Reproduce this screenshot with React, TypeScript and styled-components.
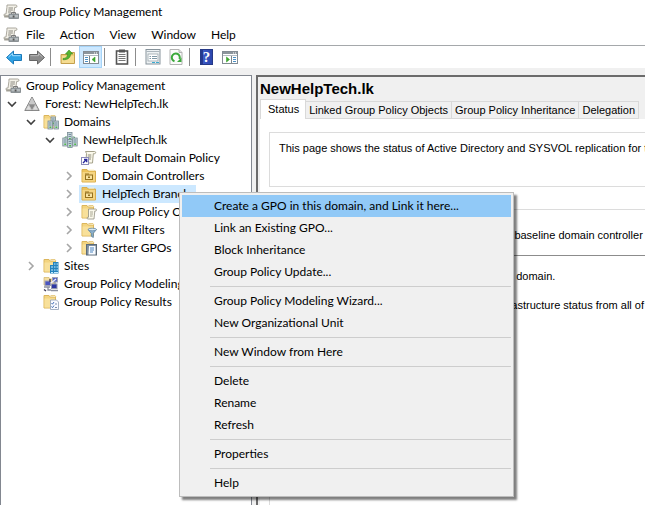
import React from "react";
import styled, { createGlobalStyle, css } from "styled-components";

const GlobalStyle = createGlobalStyle`
  *, *::before, *::after { box-sizing: border-box; }
  body { margin: 0; overflow: hidden; background: #f0f0f0; }
  button { font: inherit; color: inherit; background: none; border: 0; padding: 0; margin: 0; text-align: left; }
  ul { list-style: none; margin: 0; padding: 0; }
  svg { display: block; flex: none; }
`;

/* ---------- icons ---------- */

const Svg = ({ children, size = 16 }: { children: React.ReactNode; size?: number }) => (
  <svg width={size} height={size} viewBox="0 0 16 16" aria-hidden="true">
    {children}
  </svg>
);

const FolderBase = () => (
  <>
    <path d="M1 1.500h5l1.200 1.500H12.500v11H1z" fill="#f3d480" stroke="#dcb65c" />
    <path d="M1.500 4.500h10.500v9H1.500z" fill="#f8e09a" />
    <path d="M7.500 1.500h4.500l1 1.500" fill="#fff3c8" stroke="#dcb960" strokeWidth=".7" />
  </>
);

const ConsoleIcon = () => (
  <Svg>
    <path d="M4 1h8.700c1.600 0 1.800 2.200.3 2.400h-1.300L10.500 12H2c-1.600 0-1.600-2 0-2h1l.9-6.500z" fill="#f3f1e8" stroke="#a19e94" strokeWidth=".9" />
    <path d="M5.500 4h4.500M5.300 6h4.500M5 8h3" stroke="#8b8981" />
    <path d="M1.200 12.500h6" stroke="#a19e94" strokeWidth="2" />
    <path d="M8.500 10V8.500h4V10" fill="none" stroke="#777" />
    <rect x="6" y="10" width="9.500" height="4.500" fill="#9aa1a5" stroke="#7c8285" strokeWidth=".8" />
    <path d="M6.500 12h8.500" stroke="#d3d7d8" />
    <rect x="9.700" y="11.500" width="1.800" height="2" fill="#555" />
  </Svg>
);

const ForestIcon = () => (
  <Svg>
    <path d="M8 1l7.200 13.500H.8z" fill="#d5d5d5" stroke="#808080" />
    <path d="M8 1.800l3.300 6.200H4.700z" fill="#c9c9c9" />
    <path d="M4.600 8.200h6.800L8 14z" fill="#8a8a8a" />
    <path d="M4.600 8.800L7.600 14H1.700zM11.400 8.800L8.400 14h5.900z" fill="#dedede" stroke="#aaa" strokeWidth=".5" />
  </Svg>
);

const Tower = ({ x, y }: { x: number; y: number }) => (
  <g>
    <rect x={x} y={y} width="4.500" height="8" fill="#c3d3da" stroke="#7b8d95" strokeWidth=".8" />
    <path d={`M${x + 1} ${y + 2}h2.500M${x + 1} ${y + 4}h2.500`} stroke="#5f7e8c" strokeWidth=".8" />
    <rect x={x + 1.5} y={y + 5.5} width="1.800" height="1.500" fill="#4fb848" />
  </g>
);

const DomainsIcon = () => (
  <Svg>
    <FolderBase />
    <Tower x={8} y={3} />
    <Tower x={5} y={7} />
    <Tower x={11} y={7} />
  </Svg>
);

const DomainIcon = () => (
  <Svg>
    <Tower x={5.5} y={0.5} />
    <path d="M3 8V5h2M12.500 8V5h-2M8 8v5" fill="none" stroke="#5a9e70" />
    <Tower x={0.8} y={6} />
    <Tower x={5.7} y={7.5} />
    <Tower x={10.7} y={6} />
  </Svg>
);

const LinkIcon = () => (
  <Svg>
    <path d="M4.500 1.500h9c1.700 0 1.500 2.200 0 2.200h-1.200L11.500 13H5c-1.500 0-1.500-2 0-2l.5-7.500z" fill="#fbf9ec" stroke="#9b9780" strokeWidth=".9" />
    <path d="M6.800 5h3.500M6.800 7h3.500M6.500 9h3.500" stroke="#8a8878" />
    <rect x=".5" y="7.500" width="7" height="7" fill="#fff" stroke="#8b8bb8" />
    <path d="M2 13l3-3M3 9.500h2.700v2.800" fill="none" stroke="#29299c" strokeWidth="1.400" />
  </Svg>
);

const OuIcon = () => (
  <Svg>
    <path d="M1 1.500h5l1.200 1.500H14.500v11H1z" fill="#edc35b" stroke="#d8ae4e" />
    <path d="M1.500 4h12.500v9.500h-12.500z" fill="#f5d582" />
    <path d="M8 1.500h5v1H8z" fill="#fff3c8" />
    <rect x="4.500" y="7" width="7" height="4.500" fill="#f9e3a0" stroke="#94711f" />
    <path d="M4 6h4" stroke="#94711f" />
    <rect x="7" y="8.500" width="2" height="1.500" fill="#94711f" />
  </Svg>
);

const GpoFolderIcon = () => (
  <Svg>
    <FolderBase />
    <path d="M7.500 5h7c1.500 0 1.400 2 0 2h-.7L13 15H7c-1.300 0-1.300-1.800 0-1.800h.5z" fill="#fbf9ec" stroke="#918e80" strokeWidth=".8" />
    <path d="M9 8h3M9 10h3M9 12h2.500" stroke="#96937f" strokeWidth=".8" />
  </Svg>
);

const FilterFolderIcon = () => (
  <Svg>
    <FolderBase />
    <path d="M7 7.500h8.500l-3.200 3.800v4.200l-2-1.300v-2.900z" fill="#8fb4d0" stroke="#587c9b" strokeWidth=".8" />
    <ellipse cx="11.200" cy="7.500" rx="4.200" ry="1.300" fill="#d6e8f4" stroke="#587c9b" strokeWidth=".7" />
  </Svg>
);

const StarterIcon = () => (
  <Svg>
    <FolderBase />
    <rect x="5.500" y="4.500" width="10" height="10.500" fill="#7e8fa0" stroke="#5c6b79" />
    <path d="M8 6h6.500v8.500H7.500z" fill="#f8fbff" />
    <path d="M9 8h4M9 10h4M9 12h3" stroke="#4a83bd" />
  </Svg>
);

const SitesIcon = () => (
  <Svg>
    <FolderBase />
    <path d="M7 7h3V4h5.500v11.500H7z" fill="#2383bd" />
    <path d="M8 9h2M11 6h1.500M13.500 6H15M11 9h1.500M13.500 9H15M8 12h2M11 12h1.500M13.500 12H15M8 14.500h2M11 14.500h4" stroke="#c5ecff" strokeWidth="1.200" />
  </Svg>
);

const ModelingIcon = () => (
  <Svg>
    <path d="M1 1.500h5l1 1.500h4V9H1z" fill="#f4dda0" stroke="#d2b566" strokeWidth=".7" />
    <rect x="2" y="5" width="5.500" height="4.500" fill="#4b55c0" stroke="#9fa2b5" />
    <rect x="9.500" y="1.500" width="5" height="4.500" fill="#5060c4" stroke="#9fa2b5" />
    <rect x="8.500" y="8" width="5.500" height="4.500" fill="#2d36a2" stroke="#9498ad" />
    <path d="M1 11h6M8 14.500h7M5 11v3h3M12 6v2" stroke="#8b8f9e" strokeWidth="1.300" fill="none" />
    <path d="M8 7l5-4" stroke="#eef" strokeWidth="1.200" />
    <path d="M1 13.500l2 1.500M7 3v3" stroke="#403b55" strokeWidth="1.400" />
  </Svg>
);

const ResultsIcon = () => (
  <Svg>
    <FolderBase />
    <path d="M7.500 6h6l2 2v7.500h-8z" fill="#f9fbff" stroke="#8fa0b5" strokeWidth=".8" />
    <path d="M8.500 9l1 1.200L11 8M8.500 12.500l1 1.200 1.500-2.200" fill="none" stroke="#4772b8" />
    <path d="M12 10h2M12 13.500h2" stroke="#7a8cab" />
  </Svg>
);

const Arrow = ({ back }: { back?: boolean }) => (
  <Svg>
    <path
      d={back ? "M.5 8.500L7.500 2v3.500h8v6h-8V15z" : "M15.500 8.500L8.500 2v3.500h-8v6h8V15z"}
      fill={back ? "#2ea3e6" : "#8c8c8c"}
      stroke={back ? "#1b78b8" : "#666"}
      strokeLinejoin="round"
    />
    <path d={back ? "M2.500 8L6.500 4.500v2.200h8" : "M1.500 6.700h8V4.500l4 3.500"} fill="none" stroke={back ? "#9cdcff" : "#bcbcbc"} />
  </Svg>
);

const UpFolderIcon = () => (
  <Svg>
    <path d="M1 5.500h7l1-2h5.500v11H1z" fill="#efcf76" stroke="#c4a04d" />
    <path d="M2 7h12v7H2z" fill="#f5dc91" />
    <path d="M3 9.500c3 0 4.500-1.500 4.700-4.500H5.500L9 1l3.800 4h-2.300c0 4-3 6-7.500 5.700z" fill="#56b432" stroke="#368c20" strokeWidth=".6" />
  </Svg>
);

const PaneIcon = ({ right }: { right?: boolean }) => (
  <Svg>
    <rect x=".5" y="2.500" width="15" height="12" fill="#fff" stroke="#838c94" />
    <path d="M1 4h14" stroke="#8c959c" strokeWidth="2" />
    <path d="M11 4h1M13 4h1" stroke="#fff" />
    <path d="M1 6.500h14" stroke="#b3bcc3" />
    <path d={right ? "M9.500 7v7" : "M6.500 7v7"} stroke="#7b858c" />
    <path d={right ? "M11 8.500h3M11 10.500h3M11 12.500h3" : "M2 8.500h3M2 10.500h3M2 12.500h3"} stroke="#4b90c5" />
    <path d={right ? "M4.500 8v5l3-2.500z" : "M12 8v5l-3-2.500z"} fill="#3ba52d" stroke="#3ba52d" strokeWidth=".6" />
  </Svg>
);

const ClipboardIcon = () => (
  <Svg>
    <rect x="2.500" y="2" width="11" height="13" fill="#fff" stroke="#555" strokeWidth="1.600" />
    <rect x="5" y=".5" width="6" height="3" fill="#555" />
    <path d="M4.500 5.500h7M4.500 7.500h7M4.500 9.500h7M4.500 11.500h7" stroke="#777" />
  </Svg>
);

const PropertiesIcon = () => (
  <Svg>
    <rect x="1" y=".5" width="14" height="14.500" fill="#eef2f4" stroke="#87939b" />
    <path d="M1.500 2.500h13" stroke="#acb6bd" />
    <rect x="3" y="5" width="10" height="7" fill="#fff" stroke="#9aa5ac" strokeWidth=".8" />
    <path d="M4.500 7.500H6M7 7.500h5M4.500 9.500H6M7 9.500h5" stroke="#7f98a6" />
    <path d="M7 13.500h3M11 13.500h3" stroke="#3aaad0" />
  </Svg>
);

const RefreshIcon = () => (
  <Svg>
    <path d="M2 .5h9l3 3v12H2z" fill="#fbfbfb" stroke="#b4b4b4" />
    <path d="M11 .5v3h3" fill="#ddd" stroke="#b4b4b4" />
    <path d="M6.500 12.300A4 4 0 1 1 11.500 10" fill="none" stroke="#3ba83b" strokeWidth="2" />
    <path d="M13.500 8.500v4.500H9z" fill="#3ba83b" />
  </Svg>
);

const HelpBox = styled.span`
  display: block;
  width: 13px;
  height: 16px;
  background: linear-gradient(90deg, #24388f 0 2px, #3c59c6 2px, #2b46ad);
  border: 1px solid #263987;
  color: #fff;
  font: bold 15px/14px "Liberation Serif", serif;
  text-align: center;
`;

const Chevron = ({ open }: { open?: boolean }) => (
  <svg width="10" height="10" viewBox="0 0 10 10" aria-hidden="true">
    <path
      d={open ? "M1 3l4 4 4-4" : "M3 1l4 4-4 4"}
      fill="none"
      stroke={open ? "#404040" : "#a6a6a6"}
      strokeWidth="1.600"
    />
  </svg>
);

/* ---------- window frame ---------- */

const Window = styled.div`
  position: relative;
  display: flex;
  flex-direction: column;
  height: 100vh;
  overflow: hidden;
  background: #f0f0f0;
  color: #000;
  font: 12px/18px Lato, "Open Sans", sans-serif;
  white-space: nowrap;
`;

const TitleBar = styled.header`
  display: flex;
  align-items: center;
  gap: 4px;
  height: 24px;
  padding-left: 3px;
  background: #fff;
`;

const Title = styled.h1`
  margin: 0;
  font: inherit;
`;

const MenuBar = styled.nav`
  display: flex;
  align-items: center;
  height: 22px;
  padding-left: 3px;
  background: #fff;
  border-bottom: 1px solid #a5a8ab;
`;

const MenuBarItem = styled.button`
  padding: 0 8px 0 7px;
`;

const Toolbar = styled.div`
  display: flex;
  align-items: center;
  height: 22px;
  padding-left: 2px;
  background: #fff;
`;

const ToolButton = styled.button<{ $on?: boolean }>`
  display: flex;
  align-items: center;
  justify-content: center;
  width: 23px;
  height: 22px;
  ${(p) => p.$on && css`background: #cce8ff; box-shadow: inset 0 0 0 1px #a6d4f8;`}
`;

const ToolDivider = styled.span`
  width: 1px;
  height: 18px;
  margin: 0 5px 0 2px;
  background: #8c8c8c;
`;

const Workspace = styled.main`
  display: flex;
  flex: 1;
  min-height: 0;
  gap: 4px;
  padding-top: 7px;
`;

/* ---------- tree ---------- */

const TreePane = styled.aside`
  flex: none;
  width: 252px;
  padding-top: 1px;
  background: #fff;
  border: 1px solid #828790;
  border-bottom: 0;
`;

const TreeRow = styled.li<{ $level: number }>`
  display: flex;
  align-items: center;
  height: 18px;
  padding-left: ${(p) => p.$level * 19 - 16}px;
`;

const Toggle = styled.button`
  display: flex;
  align-items: center;
  justify-content: center;
  width: 16px;
  height: 18px;
  margin-right: 2px;
`;

const TreeLabel = styled.button<{ $selected?: boolean }>`
  display: flex;
  align-items: center;
  gap: 5px;
  height: 18px;
  padding: 0 6px 0 2px;
  background: ${(p) => (p.$selected ? "#cce8ff" : "transparent")};
`;

type Node = { level: number; label: string; icon: React.ReactNode; open?: boolean; selected?: boolean };

const nodes: Node[] = [
  { level: 0, label: "Group Policy Management", icon: <ConsoleIcon /> },
  { level: 1, label: "Forest: NewHelpTech.lk", icon: <ForestIcon />, open: true },
  { level: 2, label: "Domains", icon: <DomainsIcon />, open: true },
  { level: 3, label: "NewHelpTech.lk", icon: <DomainIcon />, open: true },
  { level: 4, label: "Default Domain Policy", icon: <LinkIcon /> },
  { level: 4, label: "Domain Controllers", icon: <OuIcon />, open: false },
  { level: 4, label: "HelpTech Branch", icon: <OuIcon />, open: false, selected: true },
  { level: 4, label: "Group Policy Objects", icon: <GpoFolderIcon />, open: false },
  { level: 4, label: "WMI Filters", icon: <FilterFolderIcon />, open: false },
  { level: 4, label: "Starter GPOs", icon: <StarterIcon />, open: false },
  { level: 2, label: "Sites", icon: <SitesIcon />, open: false },
  { level: 2, label: "Group Policy Modeling", icon: <ModelingIcon /> },
  { level: 2, label: "Group Policy Results", icon: <ResultsIcon /> },
];

const RootRow = styled(TreeRow)`
  padding-left: 2px;
`;

/* ---------- detail pane ---------- */

const DetailPane = styled.section`
  display: flex;
  flex-direction: column;
  flex: 1;
  min-width: 0;
  overflow: hidden;
  padding: 2px 0 0 2px;
  border: 2px solid #6b6b6b;
  border-width: 2px 0 0 2px;
  font: 11px/14px "Liberation Sans", Arial, sans-serif;
`;

const DetailTitle = styled.h2`
  margin: 0;
  font-size: 15px;
  line-height: 20px;
`;

const TabList = styled.div`
  display: flex;
  align-items: flex-end;
  height: 20px;
`;

const Tab = styled.button<{ $active?: boolean }>`
  height: 18px;
  padding: 0 3px;
  background: #f0f0f0;
  border: 1px solid #d9d9d9;
  border-width: 1px 1px 1px 0;
  ${(p) => p.$active && css`
    height: 20px;
    padding: 0 6px 2px 7px;
    background: #fff;
    border-width: 1px 1px 0 1px;
  `}
`;

const TabPanel = styled.div`
  display: flex;
  flex-direction: column;
  flex: 1;
  gap: 22px;
  padding: 13px 0 0 9px;
  background: #fff;
`;

const Group = styled.div<{ $fill?: boolean }>`
  flex: ${(p) => (p.$fill ? "1" : "none")};
  height: ${(p) => (p.$fill ? "auto" : "55px")};
  border: 1px solid #dcdcdc;
  border-right: 0;
  border-bottom-width: ${(p) => (p.$fill ? "0" : "1px")};
`;

const Note = styled.p`
  margin: 8px 0 0 9px;
`;

const Baseline = styled.div`
  margin-left: 9px;
  padding: 18px 0 13px;
  border-bottom: 1px solid #8c8c8c;
`;

const Notes = styled.div`
  display: flex;
  flex-direction: column;
  gap: 15px;
  padding: 13px 0 0 9px;
`;

/* ---------- context menu ---------- */

const ContextMenu = styled.div`
  position: absolute;
  left: 179px;
  top: 192px;
  width: 335px;
  padding: 2px;
  background: #f0f0f0;
  border: 1px solid #bdbdbd;
  box-shadow: 3px 3px 2px rgba(0, 0, 0, 0.5);
`;

const MenuItem = styled.button<{ $hot?: boolean }>`
  display: block;
  width: 100%;
  height: 22px;
  padding-left: 32px;
  line-height: 22px;
  background: ${(p) => (p.$hot ? "#91c9f7" : "transparent")};
`;

const MenuRule = styled.hr`
  height: 1px;
  margin: 3px 0 3px 28px;
  border: 0;
  background: #cdcdcd;
`;

const menuGroups = [
  ["Create a GPO in this domain, and Link it here...", "Link an Existing GPO...", "Block Inheritance", "Group Policy Update..."],
  ["Group Policy Modeling Wizard...", "New Organizational Unit"],
  ["New Window from Here"],
  ["Delete", "Rename", "Refresh"],
  ["Properties"],
  ["Help"],
];

export default function App() {
  return (
    <>
      <GlobalStyle />
      <Window>
        <TitleBar>
          <ConsoleIcon />
          <Title>Group Policy Management</Title>
        </TitleBar>
        <MenuBar aria-label="Main menu">
          <ConsoleIcon />
          {["File", "Action", "View", "Window", "Help"].map((m) => (
            <MenuBarItem key={m}>{m}</MenuBarItem>
          ))}
        </MenuBar>
        <Toolbar role="toolbar">
          <ToolButton aria-label="Back"><Arrow back /></ToolButton>
          <ToolButton aria-label="Forward"><Arrow /></ToolButton>
          <ToolDivider />
          <ToolButton aria-label="Up one level"><UpFolderIcon /></ToolButton>
          <ToolButton aria-label="Show console tree" $on><PaneIcon /></ToolButton>
          <ToolDivider />
          <ToolButton aria-label="Paste"><ClipboardIcon /></ToolButton>
          <ToolDivider />
          <ToolButton aria-label="Properties"><PropertiesIcon /></ToolButton>
          <ToolButton aria-label="Refresh"><RefreshIcon /></ToolButton>
          <ToolDivider />
          <ToolButton aria-label="Help"><HelpBox>?</HelpBox></ToolButton>
          <ToolButton aria-label="Show action pane"><PaneIcon right /></ToolButton>
        </Toolbar>
        <Workspace>
          <TreePane>
            <ul role="tree">
              {nodes.map((n, i) => {
                const Row = n.level === 0 ? RootRow : TreeRow;
                return (
                  <Row key={i} $level={n.level} role="treeitem" aria-expanded={n.open} aria-selected={!!n.selected}>
                    {n.level > 0 && (
                      <Toggle aria-label={`Toggle ${n.label}`} disabled={n.open === undefined}>
                        {n.open !== undefined && <Chevron open={n.open} />}
                      </Toggle>
                    )}
                    <TreeLabel $selected={n.selected}>
                      {n.icon}
                      {n.label}
                    </TreeLabel>
                  </Row>
                );
              })}
            </ul>
          </TreePane>
          <DetailPane>
            <DetailTitle>NewHelpTech.lk</DetailTitle>
            <TabList role="tablist">
              {["Status", "Linked Group Policy Objects", "Group Policy Inheritance", "Delegation"].map((t, i) => (
                <Tab key={t} role="tab" aria-selected={i === 0} $active={i === 0}>{t}</Tab>
              ))}
            </TabList>
            <TabPanel role="tabpanel">
              <Group>
                <Note>This page shows the status of Active Directory and SYSVOL replication for this domain.</Note>
              </Group>
              <Group $fill>
                <Baseline>DC001.NewHelpTech.lk is currently used as the baseline domain controller for this domain.</Baseline>
                <Notes>
                  <span>No infrastructure status information exists in this domain.</span>
                  <span>Click the Detect Now button below to gather infrastructure status from all of the domain controllers.</span>
                </Notes>
              </Group>
            </TabPanel>
          </DetailPane>
        </Workspace>
        <ContextMenu role="menu">
          {menuGroups.map((group, i) => (
            <React.Fragment key={i}>
              {i > 0 && <MenuRule />}
              {group.map((label) => (
                <MenuItem key={label} role="menuitem" $hot={label.startsWith("Create")}>{label}</MenuItem>
              ))}
            </React.Fragment>
          ))}
        </ContextMenu>
      </Window>
    </>
  );
}
